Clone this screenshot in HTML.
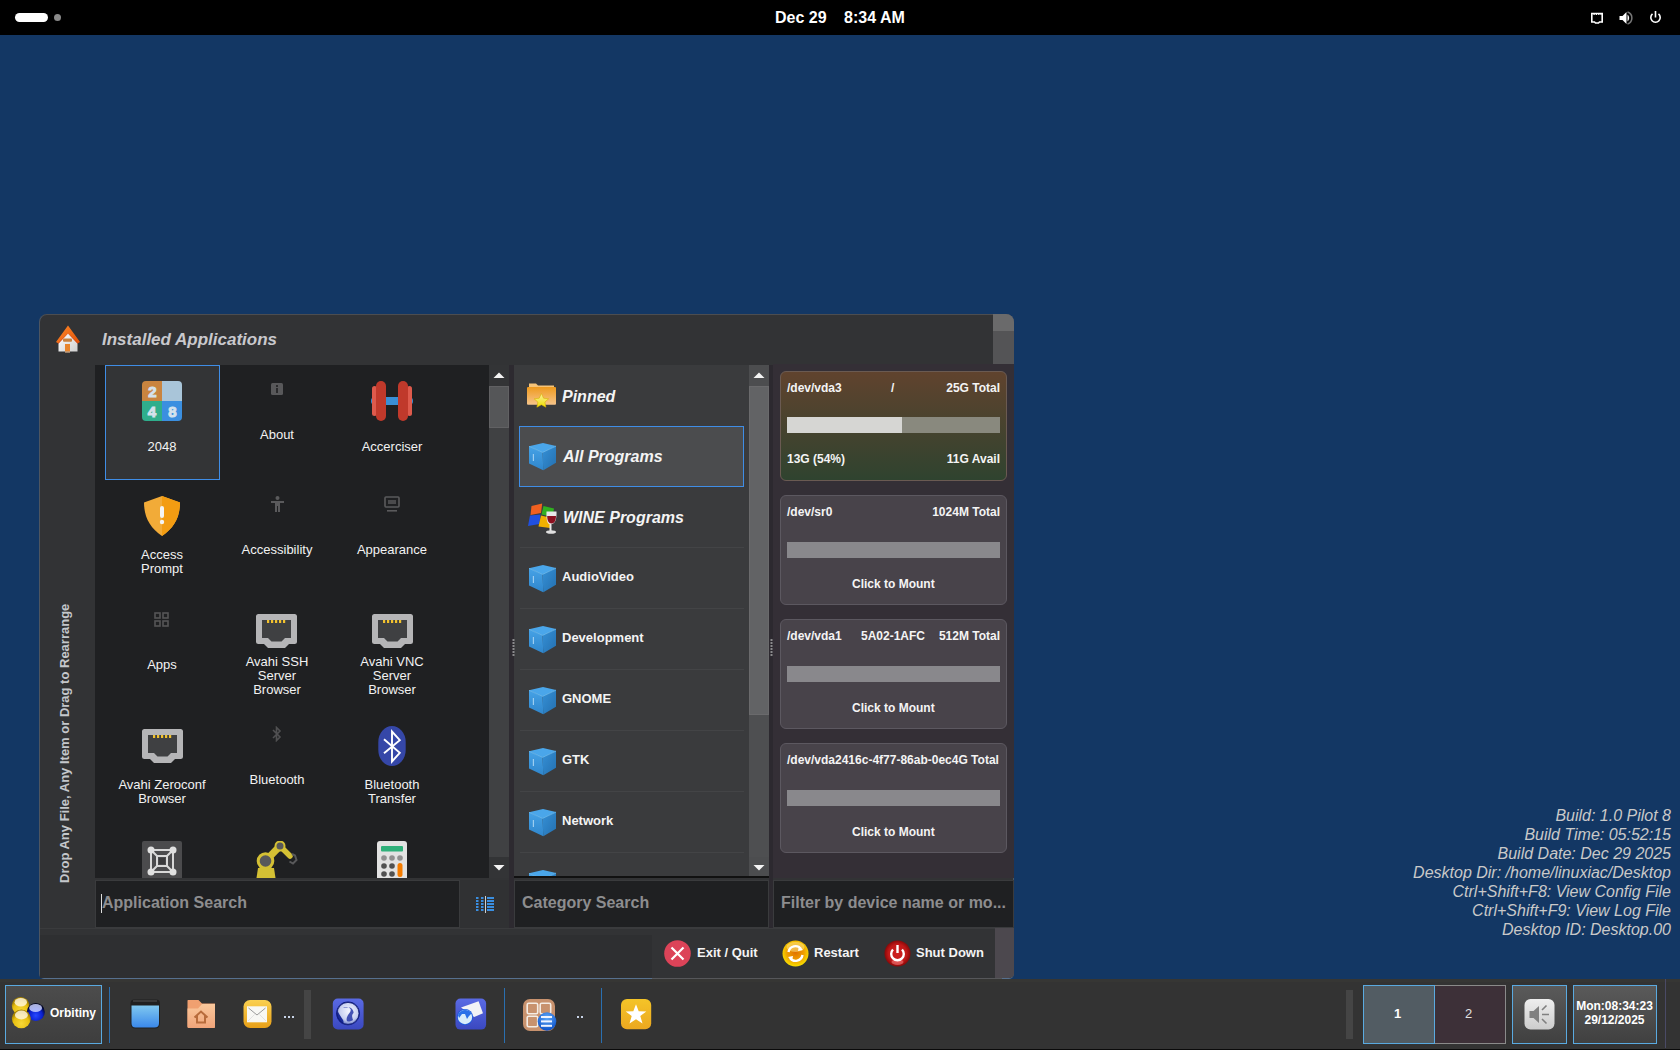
<!DOCTYPE html>
<html><head><meta charset="utf-8">
<style>
*{box-sizing:border-box;margin:0;padding:0}
html,body{width:1680px;height:1050px;overflow:hidden}
body{background:#133764;font-family:"Liberation Sans",sans-serif;position:relative}
.a{position:absolute}
.t{position:absolute;white-space:nowrap;line-height:1}
.b{font-weight:bold}
.i{font-style:italic}
.lbl{position:absolute;font-size:13px;line-height:14px;color:#f2f2f2;text-align:center;width:114px}
.cat{position:absolute;left:562px;font-size:13px;font-weight:bold;color:#f4f4f4;line-height:1}
.sep{position:absolute;left:520px;width:224px;height:1px;background:#434446}
.card{position:absolute;left:780px;width:227px;height:110px;border-radius:6px;border:1px solid #5c5860;background:#48434a}
.card .t{color:#f4f4f4;font-size:12px;font-weight:bold}
.bar{position:absolute;left:6px;width:213px;height:16px;background:#89888c}
.info{position:absolute;right:9px;font-size:16px;font-style:italic;color:#c9c9c9;line-height:19px;text-align:right}
</style></head><body>

<svg width="0" height="0" style="position:absolute">
<defs>
<linearGradient id="cubeL" x1="0" y1="0" x2="0" y2="1"><stop offset="0" stop-color="#46a2e6"/><stop offset="1" stop-color="#2f86cc"/></linearGradient>
<linearGradient id="cubeR" x1="0" y1="0" x2="1" y2="1"><stop offset="0" stop-color="#3590d6"/><stop offset="1" stop-color="#2470b0"/></linearGradient>
<symbol id="cube" viewBox="0 0 28 29">
<path d="M15 1L28 4.1L14.6 10.4L1 4.3Z" fill="#4aa6ea"/>
<path d="M1 4.3L14.6 10.4L15.3 28.3L1 21.4Z" fill="url(#cubeL)"/>
<path d="M14.6 10.4L28 4.1L28 20.7L15.3 28.3Z" fill="url(#cubeR)"/>
<path d="M1 4.3L14.6 10.4L28 4.1" fill="none" stroke="#6cbcf2" stroke-width="0.8"/>
<rect x="4.8" y="12" width="1.2" height="7" fill="#9ccdf0"/>
</symbol>
</defs></svg>
<!-- top bar -->
<div class="a" style="left:0;top:0;width:1680px;height:35px;background:#000"></div>
<div class="a" style="left:15px;top:13px;width:33px;height:9px;border-radius:5px;background:#fff"></div>
<div class="a" style="left:54px;top:14px;width:7px;height:7px;border-radius:50%;background:#8a8a8a"></div>
<div class="t b" style="left:775px;top:5px;font-size:16px;line-height:26px;color:#fff">Dec 29</div>
<div class="t b" style="left:844px;top:5px;font-size:16px;line-height:26px;color:#fff">8:34 AM</div>

<svg class="a" style="left:1590px;top:10px" width="76" height="16" viewBox="0 0 76 16"><path d="M1.8 3.5H12.2V12H9.5L8.5 13H5.5L4.5 12H1.8Z" fill="none" stroke="#fff" stroke-width="1.6"/><rect x="3.5" y="3" width="1.2" height="2" fill="#fff"/><rect x="5.8" y="3" width="1.2" height="2" fill="#fff"/><rect x="8.2" y="3" width="1.2" height="2" fill="#fff"/><rect x="10.5" y="3" width="1" height="2" fill="#fff"/><path d="M29.5 6H32.5L36.5 2V14L32.5 10H29.5Z" fill="#fff"/><path d="M37.5 4.5A4.5 4.5 0 0 1 37.5 11.5Z" fill="#fff"/><path d="M37.5 2A6.3 6.3 0 0 1 37.5 14" fill="none" stroke="#777" stroke-width="1.5"/><path d="M62.5 3.9A4.7 4.7 0 1 0 68.5 3.9" fill="none" stroke="#fff" stroke-width="1.6"/><rect x="64.7" y="1" width="1.6" height="6.5" fill="#fff"/></svg>
<!-- desktop info -->
<div class="info" style="top:806px">Build: 1.0 Pilot 8<br>Build Time: 05:52:15<br>Build Date: Dec 29 2025<br>Desktop Dir: /home/linuxiac/Desktop<br>Ctrl+Shift+F8: View Config File<br>Ctrl+Shift+F9: View Log File<br>Desktop ID: Desktop.00</div>

<!-- window -->
<div class="a" style="left:39px;top:314px;width:975px;height:665px;background:#323335;border-radius:8px 8px 5px 5px;border:1px solid #4d5560;border-top-color:#4c4d50;border-bottom-color:#56708e"></div>
<div class="a" style="left:993px;top:314px;width:21px;height:17px;background:#6a6a6b;border-radius:0 8px 0 0"></div>
<div class="a" style="left:993px;top:331px;width:21px;height:33px;background:#545456"></div>

<svg class="a" style="left:55px;top:324px" width="26" height="30" viewBox="0 0 26 30"><defs><linearGradient id="hw" x1="0" y1="0" x2="1" y2="1"><stop offset="0" stop-color="#ffffff"/><stop offset="1" stop-color="#d0d0d0"/></linearGradient><linearGradient id="hr" x1="0" y1="0" x2="1" y2="1"><stop offset="0" stop-color="#ff8a2a"/><stop offset="1" stop-color="#e05008"/></linearGradient></defs><path d="M3.5 17L13 8L22.5 17V27.5H3.5Z" fill="url(#hw)"/><path d="M13 1.4L25 18L22.5 19.5L13 9.6L3.5 19.5L1 18Z" fill="url(#hr)"/><path d="M13 9.6L22.5 19.5L23 19.2L13 9.2L3 19.2L3.5 19.5Z" fill="#c83010"/><rect x="10" y="20" width="5" height="8.5" fill="#e8842c"/><rect x="8" y="14.6" width="9" height="3.2" rx="1" fill="#c8803e"/><rect x="10" y="27.5" width="5" height="1" fill="#aaa"/></svg>
<div class="t b i" style="left:102px;top:331px;font-size:17px;line-height:17px;color:#c9c9cd">Installed Applications</div>

<!-- vertical text -->
<div class="t b" style="left:58px;top:883px;font-size:13px;line-height:13px;color:#c4c7cb;transform-origin:0 0;transform:rotate(-90deg)">Drop Any File, Any Item or Drag to Rearrange</div>

<!-- app grid -->
<div class="a" style="left:95px;top:365px;width:394px;height:513px;background:#1f2022;overflow:hidden" id="grid">
<div class="a" style="left:10px;top:0;width:115px;height:115px;background:#333436;border:1px solid #3f8de6"></div>
<!-- 2048 -->
<svg class="a" style="left:47px;top:16px" width="40" height="40" viewBox="0 0 40 40"><defs><clipPath id="c48"><rect width="40" height="40" rx="4"/></clipPath></defs><g clip-path="url(#c48)"><rect width="20" height="20" fill="#c9843f"/><rect x="20" width="20" height="20" fill="#a9c5d9"/><rect y="20" width="20" height="20" fill="#2fae8c"/><rect x="20" y="20" width="20" height="20" fill="#3b8fe0"/></g><g fill="#d4e2ec" stroke="#d4e2ec" stroke-width="1" style="font:bold 15px 'Liberation Sans'" text-anchor="middle"><text x="10.5" y="16">2</text><text x="10" y="35.5">4</text><text x="30.5" y="35.5">8</text></g></svg>
<!-- about -->
<svg class="a" style="left:176px;top:18px" width="12" height="12" viewBox="0 0 12 12"><rect width="12" height="12" rx="1.5" fill="#58585a"/><rect x="5" y="5" width="2" height="5" fill="#2a2a2c"/><rect x="5" y="2" width="2" height="2" fill="#2a2a2c"/></svg>
<!-- accerciser -->
<svg class="a" style="left:276px;top:16px" width="42" height="40" viewBox="0 0 42 40"><rect x="0" y="16" width="42" height="8" rx="4" fill="#3a8fd6"/><rect x="1" y="5" width="5" height="30" rx="2.5" fill="#de5a4c"/><rect x="36" y="5" width="5" height="30" rx="2.5" fill="#de5a4c"/><rect x="5" y="0" width="10" height="40" rx="5" fill="#c0392b"/><rect x="27" y="0" width="10" height="40" rx="5" fill="#c0392b"/></svg>
<!-- access prompt -->
<svg class="a" style="left:49px;top:131px" width="36" height="40" viewBox="0 0 36 40"><path d="M18 0L36 6.5C36 21 30 32 18 40C6 32 0 21 0 6.5Z" fill="#f2ab38"/><path d="M18 0L36 6.5C36 21 30 32 18 40Z" fill="#f39c12"/><rect x="16" y="10" width="4" height="12" rx="2" fill="#f4f4f4"/><circle cx="18" cy="26" r="2.2" fill="#f4f4f4"/></svg>
<!-- accessibility -->
<svg class="a" style="left:176px;top:131px" width="13" height="16" viewBox="0 0 13 16"><g fill="#5a5a5c"><circle cx="6.5" cy="2" r="2"/><rect x="0" y="5" width="13" height="2"/><rect x="4" y="5" width="5" height="5"/><rect x="4" y="9" width="2" height="7"/><rect x="7" y="9" width="2" height="7"/></g></svg>
<!-- appearance -->
<svg class="a" style="left:289px;top:131px" width="16" height="16" viewBox="0 0 16 16"><g fill="none" stroke="#5a5a5c" stroke-width="1.6"><rect x="1" y="1" width="14" height="10" rx="1"/></g><rect x="3" y="14" width="10" height="1.6" fill="#5a5a5c"/><rect x="4" y="4" width="8" height="4" fill="#4a4a4c"/></svg>
<!-- apps -->
<svg class="a" style="left:59px;top:247px" width="15" height="15" viewBox="0 0 15 15"><g fill="none" stroke="#555557" stroke-width="1.6"><rect x="1" y="1" width="5" height="5"/><rect x="9" y="1" width="5" height="5"/><rect x="1" y="9" width="5" height="5"/><rect x="9" y="9" width="5" height="5"/></g></svg>
<svg class="a" style="left:161px;top:249px" width="41" height="34" viewBox="0 0 41 34"><path d="M2.5 0H38.5Q41 0 41 2.5V27.5Q41 30 38.5 30H33L29 34H12L8 30H2.5Q0 30 0 27.5V2.5Q0 0 2.5 0Z" fill="#b5b5b7"/><path d="M6 6H35V24H29L25.5 27.5H15.5L12 24H6Z" fill="#3f4042"/><g fill="#f2c22e"><rect x="11" y="6" width="2.2" height="3"/><rect x="15" y="6" width="2.2" height="3"/><rect x="19" y="6" width="2.2" height="3"/><rect x="23" y="6" width="2.2" height="3"/><rect x="27" y="6" width="2.2" height="3"/></g></svg>
<svg class="a" style="left:277px;top:249px" width="41" height="34" viewBox="0 0 41 34"><path d="M2.5 0H38.5Q41 0 41 2.5V27.5Q41 30 38.5 30H33L29 34H12L8 30H2.5Q0 30 0 27.5V2.5Q0 0 2.5 0Z" fill="#b5b5b7"/><path d="M6 6H35V24H29L25.5 27.5H15.5L12 24H6Z" fill="#3f4042"/><g fill="#f2c22e"><rect x="11" y="6" width="2.2" height="3"/><rect x="15" y="6" width="2.2" height="3"/><rect x="19" y="6" width="2.2" height="3"/><rect x="23" y="6" width="2.2" height="3"/><rect x="27" y="6" width="2.2" height="3"/></g></svg>
<svg class="a" style="left:47px;top:364px" width="41" height="34" viewBox="0 0 41 34"><path d="M2.5 0H38.5Q41 0 41 2.5V27.5Q41 30 38.5 30H33L29 34H12L8 30H2.5Q0 30 0 27.5V2.5Q0 0 2.5 0Z" fill="#b5b5b7"/><path d="M6 6H35V24H29L25.5 27.5H15.5L12 24H6Z" fill="#3f4042"/><g fill="#f2c22e"><rect x="11" y="6" width="2.2" height="3"/><rect x="15" y="6" width="2.2" height="3"/><rect x="19" y="6" width="2.2" height="3"/><rect x="23" y="6" width="2.2" height="3"/><rect x="27" y="6" width="2.2" height="3"/></g></svg>
<!-- bluetooth small -->
<svg class="a" style="left:176px;top:361px" width="11" height="16" viewBox="0 0 11 16"><path d="M2 4L9 11L5.5 14.5V1.5L9 5L2 12" fill="none" stroke="#505052" stroke-width="1.6"/></svg>
<!-- bluetooth transfer -->
<svg class="a" style="left:283px;top:361px" width="28" height="40" viewBox="0 0 28 40"><rect x="0.3" y="0" width="27.4" height="40" rx="13.7" ry="16" fill="#3547a8"/><path d="M6 13.3L21.8 26.8L14 35.5V5.5L21.8 14.2L6 27.3" fill="none" stroke="#fff" stroke-width="1.9" stroke-linejoin="miter"/></svg>
<!-- frame -->
<svg class="a" style="left:47px;top:476px" width="40" height="40" viewBox="0 0 40 40"><rect width="40" height="40" rx="2" fill="#4b4b4d"/><g stroke="#d8d8d8" stroke-width="2" fill="none"><rect x="9" y="9" width="22" height="22"/><rect x="15" y="15" width="10" height="10"/><path d="M9 9L15 15M31 9L25 15M9 31L15 25M31 31L25 25"/></g><g fill="#e0e0e0"><circle cx="9" cy="9" r="3.5"/><circle cx="31" cy="9" r="3.5"/><circle cx="9" cy="31" r="3.5"/><circle cx="31" cy="31" r="3.5"/></g><rect x="17" y="17" width="6" height="6" fill="#3a3a3c"/></svg>
<!-- robot -->
<svg class="a" style="left:160px;top:476px" width="46" height="42" viewBox="0 0 46 42"><path d="M25 5L35 15" stroke="#d4c034" stroke-width="5.5" stroke-linecap="round"/><path d="M10.5 20L25 5" stroke="#d4c034" stroke-width="7"/><path d="M3 27H19L20.5 37H1.5Z" fill="#d4c034"/><circle cx="10.5" cy="20" r="8.8" fill="#d4c034"/><circle cx="10.5" cy="20" r="5.8" fill="#58585a"/><circle cx="25" cy="5" r="5.5" fill="#d4c034"/><circle cx="25" cy="5" r="3.5" fill="#58585a"/><path d="M34.5 20.5L38 22.5L41.5 19L40 14.5L37 13" stroke="#58585a" stroke-width="2" fill="none"/></svg>
<!-- calc -->
<svg class="a" style="left:282px;top:476px" width="30" height="40" viewBox="0 0 30 40"><rect width="30" height="40" rx="3" fill="#e2e2e2"/><rect x="4" y="5" width="22" height="5.5" rx="1" fill="#2fb07a"/><g fill="#909090"><circle cx="7" cy="17" r="2.8"/><circle cx="15" cy="17" r="2.8"/><circle cx="23" cy="17" r="2.8"/></g><g fill="#505050"><circle cx="7" cy="25" r="2.8"/><circle cx="15" cy="25" r="2.8"/><circle cx="7" cy="33" r="2.8"/><circle cx="15" cy="33" r="2.8"/></g><rect x="20.5" y="22" width="5" height="14" rx="2.5" fill="#f57c00"/></svg>
<!-- labels -->
<div class="lbl" style="left:10px;top:75px">2048</div>
<div class="lbl" style="left:125px;top:63px">About</div>
<div class="lbl" style="left:240px;top:75px">Accerciser</div>
<div class="lbl" style="left:10px;top:183px">Access<br>Prompt</div>
<div class="lbl" style="left:125px;top:178px">Accessibility</div>
<div class="lbl" style="left:240px;top:178px">Appearance</div>
<div class="lbl" style="left:10px;top:293px">Apps</div>
<div class="lbl" style="left:125px;top:290px">Avahi SSH<br>Server<br>Browser</div>
<div class="lbl" style="left:240px;top:290px">Avahi VNC<br>Server<br>Browser</div>
<div class="lbl" style="left:10px;top:413px">Avahi Zeroconf<br>Browser</div>
<div class="lbl" style="left:125px;top:408px">Bluetooth</div>
<div class="lbl" style="left:240px;top:413px">Bluetooth<br>Transfer</div>
</div>

<!-- app scrollbar -->
<div class="a" style="left:489px;top:365px;width:20px;height:513px;background:#404143"></div>
<div class="a" style="left:489px;top:365px;width:20px;height:21px;background:#333436"></div>
<div class="a" style="left:489px;top:386px;width:20px;height:42px;background:#555658;border:1px solid #616163"></div>
<div class="a" style="left:489px;top:857px;width:20px;height:21px;background:#333436"></div>
<div class="a" style="left:509px;top:365px;width:5px;height:563px;background:#2d2a30"></div>

<!-- category panel -->
<div class="a" style="left:514px;top:365px;width:235px;height:513px;background:#3a3b3d"></div>
<div class="a" style="left:749px;top:365px;width:20px;height:513px;background:#4e4f51"></div>
<div class="a" style="left:749px;top:365px;width:20px;height:21px;background:#4c4d4f"></div>
<div class="a" style="left:749px;top:386px;width:20px;height:329px;background:#626365;border:1px solid #6a6a6c"></div>
<div class="a" style="left:749px;top:857px;width:20px;height:21px;background:#4c4d4f"></div>
<div class="a" style="left:769px;top:365px;width:4px;height:563px;background:#2c292f"></div>

<div class="a" style="left:519px;top:426px;width:225px;height:61px;background:#4b4c4e;border:1px solid #3f8de6"></div>
<div class="sep" style="top:547px"></div>
<div class="sep" style="top:608px"></div>
<div class="sep" style="top:669px"></div>
<div class="sep" style="top:730px"></div>
<div class="sep" style="top:791px"></div>
<div class="sep" style="top:852px"></div>

<div class="t b i" style="left:562px;top:389px;font-size:16px;color:#f4f4f4">Pinned</div>
<div class="t b i" style="left:563px;top:449px;font-size:16px;color:#f4f4f4">All Programs</div>
<div class="t b i" style="left:563px;top:510px;font-size:16px;color:#f4f4f4">WINE Programs</div>
<div class="cat" style="top:570px">AudioVideo</div>
<div class="cat" style="top:631px">Development</div>
<div class="cat" style="top:692px">GNOME</div>
<div class="cat" style="top:753px">GTK</div>
<div class="cat" style="top:814px">Network</div>

<svg class="a" style="left:527px;top:382px" width="30" height="30" viewBox="0 0 30 30"><defs><linearGradient id="fld" x1="0" y1="0" x2="0" y2="1"><stop offset="0" stop-color="#ee9a1e"/><stop offset="1" stop-color="#f6c48a"/></linearGradient><linearGradient id="star" x1="0" y1="0" x2="0" y2="1"><stop offset="0" stop-color="#f8f0a0"/><stop offset="1" stop-color="#f0e000"/></linearGradient></defs><path d="M2 1.5H9L11 3.5H27V9H2Z" fill="#f6c478"/><rect x="0" y="5" width="29" height="17.7" rx="1" fill="url(#fld)"/><path d="M14.4 11.5L16.6 16.2L21.6 16.8L17.9 20.2L18.9 25.2L14.4 22.7L9.9 25.2L10.9 20.2L7.2 16.8L12.2 16.2Z" fill="url(#star)" stroke="#d8b000" stroke-width="0.6"/></svg>
<svg class="a" style="left:528px;top:442px" width="28" height="29"><use href="#cube"/></svg>
<svg class="a" style="left:527px;top:502px" width="30" height="32" viewBox="0 0 30 32"><path d="M4.5 4L15.2 1.5L14 11L3.5 13Z" fill="#f06020"/><path d="M16.5 4L27 6.5L25.5 15L14.5 12.5Z" fill="#30b020"/><path d="M3 13.5L13.5 12.5L12.5 22L1 24Z" fill="#2050e0"/><path d="M14 13.5L24.5 16L23 26L11.5 24.5Z" fill="#f0b000"/><path d="M19.5 9.5H29.5C29.8 17 28.5 21.5 24.5 22V29H22.5V22C20 21.5 19.2 17 19.5 9.5Z" fill="#e8e8e8"/><path d="M20.2 14H29C28.8 19 27.5 21.2 24.5 21.5C21.5 21.2 20.3 19 20.2 14Z" fill="#8a1020"/><ellipse cx="24" cy="30" rx="5" ry="1.8" fill="#e0e0e0"/></svg>
<svg class="a" style="left:528px;top:564px" width="28" height="29"><use href="#cube"/></svg>
<svg class="a" style="left:528px;top:625px" width="28" height="29"><use href="#cube"/></svg>
<svg class="a" style="left:528px;top:686px" width="28" height="29"><use href="#cube"/></svg>
<svg class="a" style="left:528px;top:747px" width="28" height="29"><use href="#cube"/></svg>
<svg class="a" style="left:528px;top:808px" width="28" height="29"><use href="#cube"/></svg>
<div class="a" style="left:514px;top:853px;width:235px;height:25px;overflow:hidden"><svg class="a" style="left:14px;top:16px" width="28" height="29"><use href="#cube"/></svg><div class="cat" style="left:48px;top:22px">System</div></div>
<div class="a" style="left:514px;top:876px;width:255px;height:2px;background:#111"></div>
<!-- devices panel -->
<div class="a" style="left:773px;top:364px;width:241px;height:514px;background:#342f36"></div>

<div class="card" style="top:371px;background:linear-gradient(#60432e,#2f432f);border-color:#6a5a52">
  <div class="t" style="left:6px;top:10px">/dev/vda3</div>
  <div class="t" style="left:110px;top:10px">/</div>
  <div class="t" style="right:6px;top:10px">25G Total</div>
  <div class="bar" style="top:45px;background:#89897e"><div class="a" style="left:0;top:0;width:115px;height:16px;background:#d6d6d3"></div></div>
  <div class="t" style="left:6px;top:81px">13G (54%)</div>
  <div class="t" style="right:6px;top:81px">11G Avail</div>
</div>
<div class="card" style="top:495px">
  <div class="t" style="left:6px;top:10px">/dev/sr0</div>
  <div class="t" style="right:6px;top:10px">1024M Total</div>
  <div class="bar" style="top:46px"></div>
  <div class="t" style="left:71px;top:82px">Click to Mount</div>
</div>
<div class="card" style="top:619px">
  <div class="t" style="left:6px;top:10px">/dev/vda1</div>
  <div class="t" style="left:80px;top:10px">5A02-1AFC</div>
  <div class="t" style="right:6px;top:10px">512M Total</div>
  <div class="bar" style="top:46px"></div>
  <div class="t" style="left:71px;top:82px">Click to Mount</div>
</div>
<div class="card" style="top:743px">
  <div class="t" style="left:6px;top:10px">/dev/vda2416c-4f77-86ab-0ec4G Total</div>
  <div class="bar" style="top:46px"></div>
  <div class="t" style="left:71px;top:82px">Click to Mount</div>
</div>

<svg class="a" style="left:493px;top:371px" width="12" height="8" viewBox="0 0 12 8"><path d="M0.5 7L6 1.5L11.5 7Z" fill="#f4f4f4"/></svg>
<svg class="a" style="left:493px;top:864px" width="12" height="8" viewBox="0 0 12 8"><path d="M0.5 1L6 6.5L11.5 1Z" fill="#f4f4f4"/></svg>
<svg class="a" style="left:753px;top:371px" width="12" height="8" viewBox="0 0 12 8"><path d="M0.5 7L6 1.5L11.5 7Z" fill="#f4f4f4"/></svg>
<svg class="a" style="left:753px;top:864px" width="12" height="8" viewBox="0 0 12 8"><path d="M0.5 1L6 6.5L11.5 1Z" fill="#f4f4f4"/></svg>
<svg class="a" style="left:512px;top:639px" width="3" height="19" viewBox="0 0 3 19"><g fill="#8a8a8c"><rect x="0.5" y="0" width="2" height="2"/><rect x="0.5" y="3" width="2" height="2"/><rect x="0.5" y="6" width="2" height="2"/><rect x="0.5" y="9" width="2" height="2"/><rect x="0.5" y="12" width="2" height="2"/><rect x="0.5" y="15" width="2" height="2"/></g></svg>
<svg class="a" style="left:770px;top:639px" width="3" height="19" viewBox="0 0 3 19"><g fill="#8a8a8c"><rect x="0.5" y="0" width="2" height="2"/><rect x="0.5" y="3" width="2" height="2"/><rect x="0.5" y="6" width="2" height="2"/><rect x="0.5" y="9" width="2" height="2"/><rect x="0.5" y="12" width="2" height="2"/><rect x="0.5" y="15" width="2" height="2"/></g></svg>
<!-- search row -->
<div class="a" style="left:95px;top:880px;width:365px;height:48px;background:#1f2022;border:1px solid #3a3b3d"></div>
<div class="t b" style="left:102px;top:895px;font-size:16px;color:#8d8d8f">Application Search</div>
<div class="a" style="left:101px;top:894px;width:1px;height:19px;background:#ddd"></div>
<div class="a" style="left:460px;top:880px;width:49px;height:48px;background:#303133"></div>
<div class="a" style="left:514px;top:880px;width:255px;height:48px;background:#1f2022;border:1px solid #3a3b3d"></div>
<div class="t b" style="left:522px;top:895px;font-size:16px;color:#8d8d8f">Category Search</div>
<div class="a" style="left:773px;top:880px;width:241px;height:48px;background:#1f2022;border:1px solid #3a3b3d"></div>
<div class="t b" style="left:781px;top:895px;font-size:16px;color:#8d8d8f">Filter by device name or mo...</div>

<!-- bottom buttons -->
<div class="a" style="left:40px;top:935px;width:612px;height:43px;background:#2e2f31"></div>
<div class="a" style="left:40px;top:928px;width:955px;height:1px;background:#3a3b3d"></div>
<div class="a" style="left:652px;top:978px;width:350px;height:1px;background:#56575a"></div>
<div class="a" style="left:995px;top:928px;width:19px;height:50px;background:#4c484e;border-radius:0 0 5px 0"></div>
<div class="t b" style="left:697px;top:946px;font-size:13px;line-height:14px;color:#f4f4f4">Exit / Quit</div>
<div class="t b" style="left:814px;top:946px;font-size:13px;line-height:14px;color:#f4f4f4">Restart</div>
<div class="t b" style="left:916px;top:946px;font-size:13px;line-height:14px;color:#f4f4f4">Shut Down</div>

<svg class="a" style="left:664px;top:940px" width="27" height="27" viewBox="0 0 27 27"><circle cx="13.5" cy="13.5" r="13.3" fill="#dc4358"/><path d="M7.5 7.5L19.5 19.5M19.5 7.5L7.5 19.5" stroke="#fff" stroke-width="2.2"/></svg>
<svg class="a" style="left:782px;top:940px" width="27" height="27" viewBox="0 0 27 27"><defs><radialGradient id="rg" cx="0.5" cy="0.45" r="0.55"><stop offset="0" stop-color="#e07000"/><stop offset="0.6" stop-color="#f0a000"/><stop offset="1" stop-color="#f8e000"/></radialGradient></defs><circle cx="13.5" cy="13.5" r="13" fill="url(#rg)"/><ellipse cx="13.5" cy="7" rx="9" ry="5" fill="#fff8a0" opacity="0.45"/><path d="M6.5 12A7 7 0 0 1 19 9M20.5 15A7 7 0 0 1 8 18" fill="none" stroke="#fff" stroke-width="2.4"/><path d="M17 6L21 10L16 11Z M10 21L6 17L11 16Z" fill="#fff"/></svg>
<svg class="a" style="left:884px;top:940px" width="27" height="27" viewBox="0 0 27 27"><defs><radialGradient id="rr" cx="0.5" cy="0.5" r="0.5"><stop offset="0" stop-color="#d02020"/><stop offset="0.7" stop-color="#c01818"/><stop offset="1" stop-color="#8a0808"/></radialGradient></defs><circle cx="13.5" cy="13.5" r="13" fill="url(#rr)"/><ellipse cx="13.5" cy="22" rx="6" ry="3" fill="#ff9090" opacity="0.5"/><path d="M9 9.5A6.3 6.3 0 1 0 18 9.5" fill="none" stroke="#fff" stroke-width="2.4"/><path d="M13.5 5V13" stroke="#fff" stroke-width="2.4"/></svg>
<svg class="a" style="left:474px;top:893px" width="22" height="22" viewBox="0 0 22 22"><g fill="#3a8ee0"><rect x="2" y="4" width="2.5" height="2"/><rect x="2" y="7" width="2.5" height="2"/><rect x="2" y="10" width="2.5" height="2"/><rect x="2" y="13" width="2.5" height="2"/><rect x="2" y="16" width="2.5" height="2"/><rect x="7" y="4" width="2.5" height="2"/><rect x="7" y="7" width="2.5" height="2"/><rect x="7" y="10" width="2.5" height="2"/><rect x="7" y="13" width="2.5" height="2"/><rect x="7" y="16" width="2.5" height="2"/><rect x="13" y="4" width="7" height="2"/><rect x="13" y="7" width="7" height="2"/><rect x="13" y="10" width="7" height="2"/><rect x="13" y="13" width="7" height="2"/><rect x="13" y="16" width="7" height="2"/></g><rect x="11" y="3" width="1" height="17" fill="#d0d0d0"/></svg>
<!-- taskbar -->
<div class="a" style="left:0;top:979px;width:1680px;height:70px;background:#333333"></div>
<div class="a" style="left:0;top:979px;width:1680px;height:3px;background:#363634"></div>
<div class="a" style="left:0;top:1049px;width:1680px;height:1px;background:#0a0a0a"></div>
<div class="a" style="left:5px;top:985px;width:97px;height:59px;background:linear-gradient(#4c4c4c,#3e3e3e);border:1px solid #5aaae0"></div>
<div class="t b" style="left:50px;top:1007px;font-size:12px;color:#fff">Orbitiny</div>
<div class="a" style="left:109px;top:987px;width:1px;height:56px;background:#2a6fb0"></div>
<div class="a" style="left:304px;top:990px;width:7px;height:49px;background:#454545"></div>
<div class="a" style="left:504px;top:988px;width:1px;height:55px;background:#2a6fb0"></div>
<div class="a" style="left:601px;top:988px;width:1px;height:55px;background:#2a6fb0"></div>

<div class="a" style="left:1346px;top:990px;width:7px;height:49px;background:#454545"></div>
<div class="a" style="left:1363px;top:985px;width:72px;height:59px;background:#525c63;border:1px solid #5aaae0"></div>
<div class="a" style="left:1435px;top:985px;width:71px;height:59px;background:#3d3038;border:1px solid #8a8a8a;border-left:none"></div>
<div class="t b" style="left:1394px;top:1007px;font-size:13px;color:#fff">1</div>
<div class="t" style="left:1465px;top:1007px;font-size:13px;color:#e0e0e0">2</div>
<div class="a" style="left:1512px;top:985px;width:55px;height:59px;background:linear-gradient(#5a5a5a,#404040);border:1px solid #5aaae0"></div>
<div class="a" style="left:1573px;top:985px;width:84px;height:59px;background:linear-gradient(#5a5a5a,#404040);border:1px solid #5aaae0"></div>
<div class="t b" style="left:1576px;top:999px;font-size:12px;line-height:14px;color:#fff;text-align:center;width:77px">Mon:08:34:23<br>29/12/2025</div>
<svg class="a" style="left:8px;top:993px" width="42" height="40" viewBox="0 0 42 40"><defs><radialGradient id="yb" cx="0.5" cy="0.75" r="0.6"><stop offset="0" stop-color="#f8d838"/><stop offset="0.7" stop-color="#e8c010"/><stop offset="1" stop-color="#a88400"/></radialGradient><radialGradient id="bb" cx="0.5" cy="0.7" r="0.6"><stop offset="0" stop-color="#2848ff"/><stop offset="0.6" stop-color="#0a20d0"/><stop offset="1" stop-color="#000420"/></radialGradient></defs><circle cx="12.6" cy="12.8" r="8.8" fill="url(#yb)"/><ellipse cx="12.8" cy="9.3" rx="6.2" ry="4.2" fill="#fff6d8" opacity="0.85"/><circle cx="27.8" cy="18.9" r="9" fill="url(#bb)"/><ellipse cx="27.6" cy="15" rx="6.5" ry="4" fill="#c8d0ff" opacity="0.85"/><circle cx="13.3" cy="25.8" r="9.4" fill="url(#yb)"/><ellipse cx="13.4" cy="22" rx="6.5" ry="4.4" fill="#fff6d8" opacity="0.85"/></svg>
<svg class="a" style="left:130px;top:999px" width="31" height="31" viewBox="0 0 31 31"><defs><linearGradient id="wb" x1="0" y1="0" x2="0" y2="1"><stop offset="0" stop-color="#80c8f0"/><stop offset="1" stop-color="#3a88ea"/></linearGradient></defs><path d="M4 0.5H26Q30 0.5 30 4.5V24Q30 29.5 24.5 29.5H5.5Q0.5 29.5 0.5 24V4.5Q0.5 0.5 4 0.5Z" fill="#202020"/><path d="M1.5 6.5H29V24Q29 28.5 24.5 28.5H5.5Q1.5 28.5 1.5 24Z" fill="url(#wb)"/><rect x="3" y="1.5" width="24" height="1" fill="#555"/></svg>
<svg class="a" style="left:187px;top:1000px" width="29" height="29" viewBox="0 0 29 29"><defs><linearGradient id="fh" x1="0" y1="0" x2="0" y2="1"><stop offset="0" stop-color="#fac89c"/><stop offset="1" stop-color="#f0a47a"/></linearGradient></defs><path d="M1 0H11.5L15 3.5H28V27Q28 28 27 28H2Q0.5 28 0.5 26.5V1Q0.5 0 1 0Z" fill="#f0a070"/><path d="M0.5 8.5H11L15 4H28V26.5Q28 28 26.5 28H2Q0.5 28 0.5 26.5Z" fill="url(#fh)"/><path d="M7.5 17.5L14 11.5L20.5 17.5M10 15.5V22.5H18V15.5" fill="none" stroke="#b86c3c" stroke-width="2"/></svg>
<svg class="a" style="left:243px;top:1000px" width="29" height="29" viewBox="0 0 29 29"><defs><linearGradient id="mg" x1="0" y1="0" x2="0" y2="1"><stop offset="0" stop-color="#fad050"/><stop offset="1" stop-color="#e8a018"/></linearGradient></defs><rect x="0.5" y="0" width="28" height="28" rx="6.5" fill="url(#mg)"/><rect x="4" y="6.3" width="20" height="16" fill="#f8f8f4"/><path d="M5.5 8L14 15L22.5 8" fill="none" stroke="#909090" stroke-width="0.9"/><path d="M5 21L11.5 14.5M23 21L16.5 14.5" stroke="#d8d8d8" stroke-width="0.7"/></svg>
<div class="a" style="left:284px;top:1016px;width:2px;height:2px;background:#c8d4e8"></div><div class="a" style="left:288px;top:1016px;width:2px;height:2px;background:#c8d4e8"></div><div class="a" style="left:292px;top:1016px;width:2px;height:2px;background:#c8d4e8"></div>
<svg class="a" style="left:332px;top:998px" width="32" height="32" viewBox="0 0 32 32"><defs><linearGradient id="gb" x1="0" y1="0" x2="0" y2="1"><stop offset="0" stop-color="#5a6ae4"/><stop offset="1" stop-color="#3a48c0"/></linearGradient><radialGradient id="gl" cx="0.55" cy="0.4" r="0.6"><stop offset="0" stop-color="#f4f6ff"/><stop offset="0.7" stop-color="#c8d0f0"/><stop offset="1" stop-color="#7080c8"/></radialGradient></defs><rect x="0.8" y="0.6" width="30.8" height="30.8" rx="5" fill="url(#gb)"/><circle cx="16" cy="15.4" r="11.8" fill="#0e1c80"/><circle cx="16" cy="15.4" r="11" fill="url(#gl)"/><path d="M5.5 13C7 16 9 19 11 22C12 24 11.5 26 11 26.3C7.5 24.5 5 20.5 5 15.4Z" fill="#1a2a98"/><path d="M11 9.5C13 8.5 17 9 18.5 11C19.5 13 17.5 15 16 17C15 19 14 21 15 23C16.5 24 19 23.5 21 22C20 19 19.5 17 21.5 15C22 13 20 10.5 18 9.5Z" fill="#2838a8" opacity="0.85"/><circle cx="16" cy="15.4" r="11" fill="none" stroke="#0a1470" stroke-width="0.8"/></svg>
<svg class="a" style="left:455px;top:998px" width="32" height="32" viewBox="0 0 32 32"><rect x="0.5" y="0.6" width="30.6" height="31" rx="5" fill="url(#gb)"/><path d="M6 9.5L23.6 3.3L28 15.3L19.2 19Z" fill="#f2f2f6"/><circle cx="10" cy="19" r="8" fill="#1a5ae0"/><circle cx="10" cy="19" r="7.2" fill="#d8ecfa"/><path d="M3 17C4 14 7 12 10 12C13 12 15.5 13.5 16.5 15.5L14 18L12 21L10 16L7 16L4 20Z" fill="#2a70e8"/></svg>
<svg class="a" style="left:523px;top:999px" width="34" height="33" viewBox="0 0 34 33"><defs><radialGradient id="ab" cx="0.5" cy="0.3" r="0.7"><stop offset="0" stop-color="#60a8f8"/><stop offset="1" stop-color="#0a50c8"/></radialGradient></defs><rect x="0" y="0" width="32" height="32" rx="7" fill="#c8926e"/><g fill="none" stroke="#f4ece4" stroke-width="1.6"><rect x="4.2" y="4.2" width="10.5" height="10.5" rx="1.5"/><rect x="17.2" y="4.2" width="10.5" height="10.5" rx="1.5"/><rect x="4.2" y="17.2" width="10.5" height="10.5" rx="1.5"/></g><circle cx="24" cy="22.5" r="9.3" fill="url(#ab)"/><g fill="#f0f4ff"><rect x="18" y="17" width="11" height="2"/><rect x="18" y="21.4" width="11" height="2"/><rect x="18" y="25.8" width="11" height="2"/></g></svg>
<div class="a" style="left:577px;top:1016px;width:2px;height:2px;background:#c8d4e8"></div><div class="a" style="left:581px;top:1016px;width:2px;height:2px;background:#c8d4e8"></div>
<svg class="a" style="left:621px;top:999px" width="31" height="31" viewBox="0 0 31 31"><defs><linearGradient id="sg" x1="0" y1="0" x2="0" y2="1"><stop offset="0" stop-color="#f4c428"/><stop offset="1" stop-color="#eca820"/></linearGradient></defs><rect x="0" y="0" width="30.2" height="30.2" rx="6" fill="url(#sg)"/><path d="M15 5.2L17.7 12.3L25.3 12.5L19.3 17.1L21.5 24.5L15 20.2L8.5 24.5L10.7 17.1L4.7 12.5L12.3 12.3Z" fill="#fff"/></svg>
<svg class="a" style="left:1524px;top:998px" width="32" height="32" viewBox="0 0 32 32"><defs><linearGradient id="vg" x1="0" y1="0" x2="0" y2="1"><stop offset="0" stop-color="#eeeeee"/><stop offset="1" stop-color="#cccccc"/></linearGradient></defs><rect x="0.5" y="1" width="30" height="30.5" rx="6" fill="url(#vg)"/><path d="M5.5 13H9.5L15 8V25L9.5 20H5.5Z" fill="#808080"/><path d="M18 12L22.5 7.5M18 16.5H25M18 21L22.5 25.5" stroke="#808080" stroke-width="1.6"/></svg>
<div class="a" style="left:1665px;top:979px;width:1px;height:69px;background:#4a4a66"></div>

</body></html>
